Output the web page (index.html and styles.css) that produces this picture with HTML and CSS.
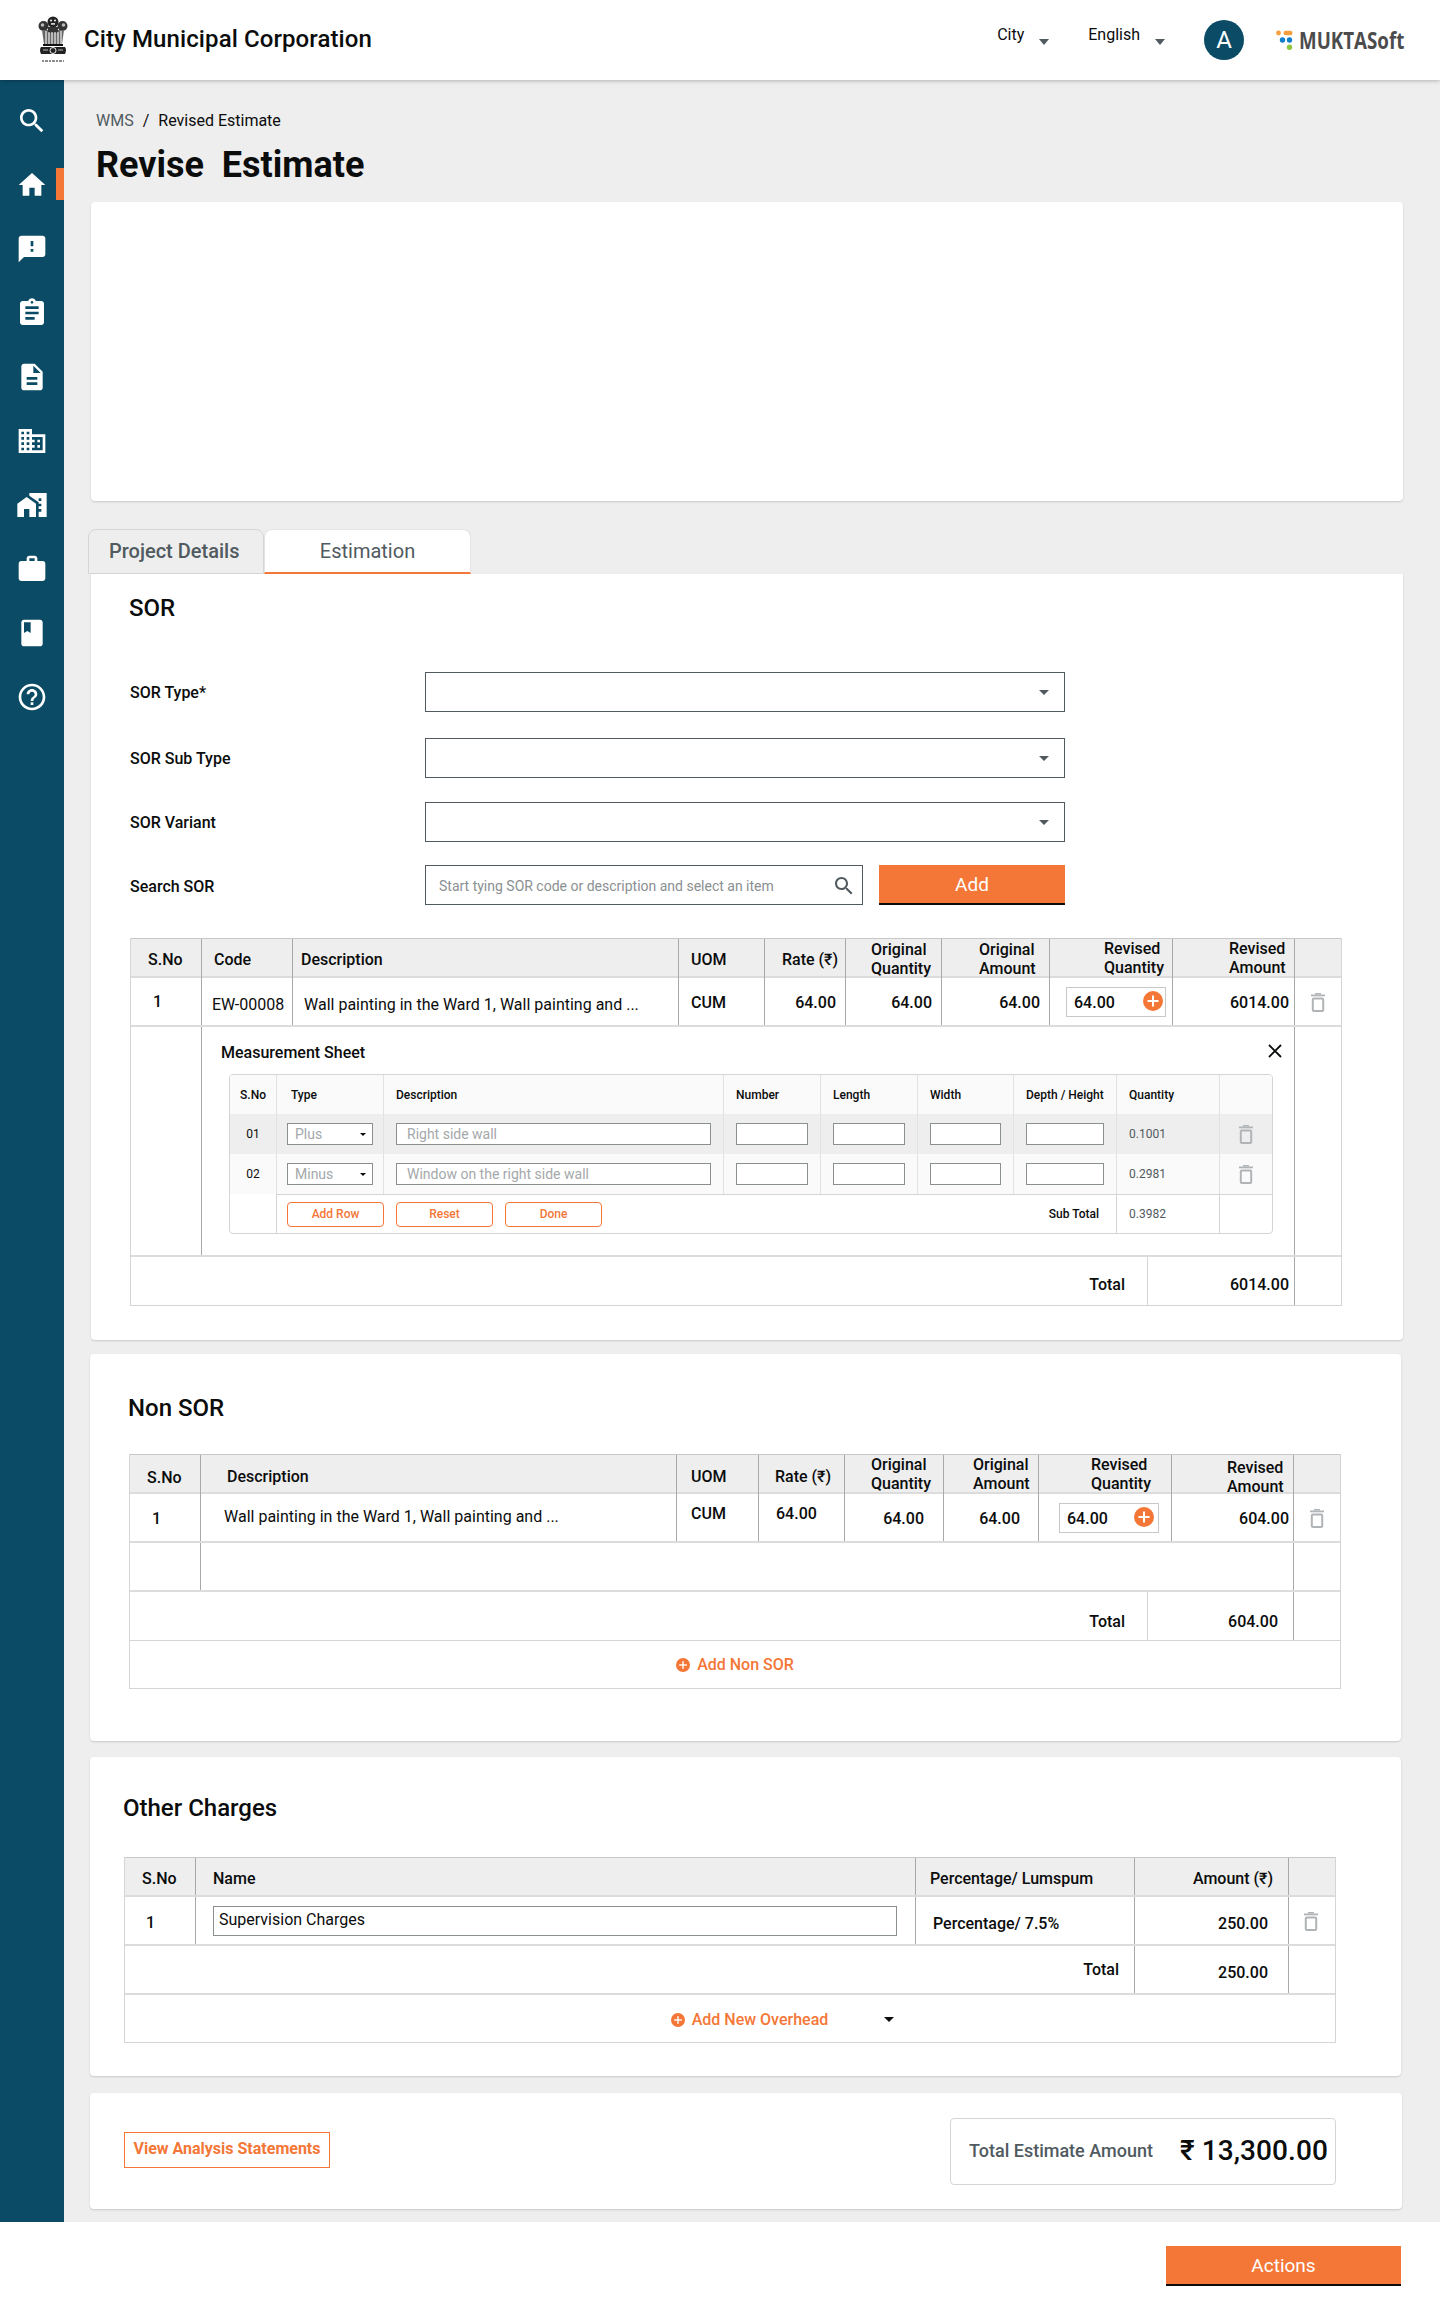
FILE: index.html
```html
<!DOCTYPE html>
<html lang="en">
<head>
<meta charset="utf-8">
<title>Revise Estimate</title>
<link rel="stylesheet" href="styles.css">
</head>
<body>
<svg class="defs" width="0" height="0" aria-hidden="true">
  <symbol id="trash" viewBox="0 0 14 19"><rect x="4" y="0" width="6" height="1.5" fill="#b1b4b6"/><rect x="0" y="1.5" width="14" height="1.8" fill="#b1b4b6"/><rect x="1.8" y="5.4" width="10.4" height="12.6" rx="1" fill="none" stroke="#b1b4b6" stroke-width="2"/></symbol>
  <symbol id="plus" viewBox="0 0 20 20"><circle cx="10" cy="10" r="10" fill="#f47738"/><rect x="4.5" y="9" width="11" height="2" fill="#fff"/><rect x="9" y="4.5" width="2" height="11" fill="#fff"/></symbol>
</svg>

<header class="topbar">
  <svg class="emblem" width="30" height="47" viewBox="0 0 30 47" aria-label="Emblem">
    <circle cx="5.500" cy="10" r="5" fill="#333"/><circle cx="24.500" cy="10" r="5" fill="#333"/><circle cx="15" cy="6" r="5.500" fill="#222"/>
    <circle cx="4.500" cy="9" r="1.800" fill="#bbb"/><circle cx="25.500" cy="9" r="1.800" fill="#bbb"/><circle cx="13" cy="4.500" r="1.100" fill="#ddd"/><circle cx="17" cy="4.500" r="1.100" fill="#ddd"/><rect x="13" y="7" width="4" height="1.800" fill="#ccc"/>
    <path d="M4 14h22l-2 14H6z" fill="#666"/><path d="M10 11h10v6H10z" fill="#333"/>
    <path d="M8 15v13M11 16v12M14 16v12M17 16v12M20 16v12M23 15v13" stroke="#eee" stroke-width="1.200"/>
    <rect x="5" y="28" width="20" height="2" fill="#111"/>
    <path d="M3 31h24q2 3 0 7H3q-2-4 0-7z" fill="#222"/>
    <circle cx="15" cy="34.500" r="3" fill="none" stroke="#eee" stroke-width="1"/><path d="M5 34h5M20 34h5" stroke="#bbb" stroke-width="1.200"/>
    <path d="M4 45h22" stroke="#666" stroke-width="1.500" stroke-dasharray="2 1 3 1"/>
  </svg>
  <div class="org">City Municipal Corporation</div>
  <div class="top-select top-city"><span>City</span><i class="caret caret-grey"></i></div>
  <div class="top-select top-lang"><span>English</span><i class="caret caret-grey"></i></div>
  <div class="avatar">A</div>
  <div class="brand">
    <svg class="brand-mark" width="18" height="20" viewBox="0 0 18 20" aria-hidden="true"><circle cx="2.500" cy="3" r="2.400" fill="#f79e3f"/><rect x="7.500" y="0.700" width="9" height="4.600" rx="2.300" fill="#f79e3f"/><circle cx="6.500" cy="10" r="2.700" fill="#0f7ecb"/><circle cx="13.500" cy="10" r="2.700" fill="#0f7ecb"/><circle cx="13.500" cy="17.300" r="2.700" fill="#8dc63f"/></svg>
    <span class="brand-name">MUKTASoft</span>
  </div>
</header>

<div class="shell">
  <nav class="sidebar">
    <a class="nav-item"><svg viewBox="0 0 24 24"><path d="M15.500 14h-.79l-.28-.27C15.410 12.590 16 11.110 16 9.500 16 5.910 13.090 3 9.500 3S3 5.910 3 9.500 5.910 16 9.500 16c1.610 0 3.090-.59 4.230-1.570l.27.28v.79l5 4.990L20.490 19l-4.990-5zm-6 0C7.010 14 5 11.990 5 9.500S7.010 5 9.500 5 14 7.010 14 9.500 11.990 14 9.500 14z"/></svg></a>
    <a class="nav-item nav-active"><svg viewBox="0 0 24 24"><path d="M10 20v-6h4v6h5v-8h3L12 3 2 12h3v8z"/></svg></a>
    <a class="nav-item"><svg viewBox="0 0 24 24"><path d="M20 2H4c-1.100 0-1.990.9-1.990 2L2 22l4-4h14c1.100 0 2-.9 2-2V4c0-1.100-.9-2-2-2zm-7 12h-2v-2h2v2zm0-4h-2V6h2v4z"/></svg></a>
    <a class="nav-item"><svg viewBox="0 0 24 24"><path d="M19 3h-4.180C14.400 1.840 13.300 1 12 1c-1.300 0-2.400.84-2.820 2H5c-1.100 0-2 .9-2 2v14c0 1.100.9 2 2 2h14c1.100 0 2-.9 2-2V5c0-1.100-.9-2-2-2zm-7 0c.55 0 1 .45 1 1s-.45 1-1 1-1-.45-1-1 .45-1 1-1zm2 14H7v-2h7v2zm3-4H7v-2h10v2zm0-4H7V7h10v2z"/></svg></a>
    <a class="nav-item"><svg viewBox="0 0 24 24"><path d="M14 2H6c-1.100 0-1.990.9-1.990 2L4 20c0 1.100.89 2 1.990 2H18c1.100 0 2-.9 2-2V8l-6-6zm2 16H8v-2h8v2zm0-4H8v-2h8v2zm-3-5V3.500L18.500 9H13z"/></svg></a>
    <a class="nav-item"><svg viewBox="0 0 24 24"><path d="M12 7V3H2v18h20V7H12zM6 19H4v-2h2v2zm0-4H4v-2h2v2zm0-4H4V9h2v2zm0-4H4V5h2v2zm4 12H8v-2h2v2zm0-4H8v-2h2v2zm0-4H8V9h2v2zm0-4H8V5h2v2zm10 12h-8v-2h2v-2h-2v-2h2v-2h-2V9h8v10zm-2-8h-2v2h2v-2zm0 4h-2v2h2v-2z"/></svg></a>
    <a class="nav-item"><svg viewBox="0 0 24 24"><path d="M1 11v10h5v-6h4v6h5V11L8 6zM10 3v1.970l7 5V11h2v2h-2v2h2v2h-2v4h6V3H10zm9 6h-2V7h2v2z"/></svg></a>
    <a class="nav-item"><svg viewBox="0 0 24 24"><path d="M20 6h-4V4c0-1.110-.89-2-2-2h-4c-1.110 0-2 .89-2 2v2H4c-1.110 0-1.990.89-1.990 2L2 19c0 1.110.89 2 2 2h16c1.110 0 2-.89 2-2V8c0-1.110-.89-2-2-2zm-6 0h-4V4h4v2z"/></svg></a>
    <a class="nav-item"><svg viewBox="0 0 24 24"><path d="M18 2H6c-1.100 0-2 .9-2 2v16c0 1.100.9 2 2 2h12c1.100 0 2-.9 2-2V4c0-1.100-.9-2-2-2zM6 4h5v8l-2.500-1.500L6 12V4z"/></svg></a>
    <a class="nav-item"><svg viewBox="0 0 24 24"><path d="M11 18h2v-2h-2v2zm1-16C6.480 2 2 6.480 2 12s4.480 10 10 10 10-4.480 10-10S17.520 2 12 2zm0 18c-4.410 0-8-3.590-8-8s3.590-8 8-8 8 3.590 8 8-3.590 8-8 8zm0-14c-2.210 0-4 1.790-4 4h2c0-1.100.9-2 2-2s2 .9 2 2c0 2-3 1.750-3 5h2c0-2.250 3-2.500 3-5 0-2.210-1.790-4-4-4z"/></svg></a>
  </nav>

  <main class="main">
    <div class="crumbs"><span class="crumb-root">WMS</span><span class="crumb-sep">/</span><span>Revised Estimate</span></div>
    <h1 class="page-title">Revise  Estimate</h1>
    <section class="card card-blank"></section>

    <div class="tabs">
      <div class="tab tab-off">Project Details</div>
      <div class="tab tab-on">Estimation</div>
    </div>

    <section class="card card-sor">
      <h2 class="sec-title">SOR</h2>
      <div class="form-row row-a"><label class="flabel">SOR Type*</label><div class="fselect"><i class="caret caret-dark"></i></div></div>
      <div class="form-row row-b"><label class="flabel">SOR Sub Type</label><div class="fselect"><i class="caret caret-dark"></i></div></div>
      <div class="form-row row-c"><label class="flabel">SOR Variant</label><div class="fselect"><i class="caret caret-dark"></i></div></div>
      <div class="form-row row-d">
        <label class="flabel">Search SOR</label>
        <div class="fsearch-wrap">
          <div class="fsearch"><span class="ph">Start tying SOR code or description and select an item</span>
            <svg width="24" height="24" viewBox="0 0 24 24"><path fill="#505a5f" d="M15.500 14h-.79l-.28-.27C15.410 12.590 16 11.110 16 9.500 16 5.910 13.090 3 9.500 3S3 5.910 3 9.500 5.910 16 9.500 16c1.610 0 3.090-.59 4.230-1.570l.27.28v.79l5 4.990L20.490 19l-4.990-5zm-6 0C7.010 14 5 11.990 5 9.500S7.010 5 9.500 5 14 7.010 14 9.500 11.990 14 9.500 14z"/></svg>
          </div>
          <button class="btn-add">Add</button>
        </div>
      </div>

      <div class="tbl tbl-sor">
        <div class="tr thead">
          <div class="td">S.No</div><div class="td">Code</div><div class="td">Description</div><div class="td">UOM</div><div class="td td-r">Rate (₹)</div><div class="td two">Original Quantity</div><div class="td two">Original Amount</div><div class="td two">Revised Quantity</div><div class="td two">Revised Amount</div><div class="td"></div>
        </div>
        <div class="tr tbody">
          <div class="td med">1</div><div class="td reg">EW-00008</div><div class="td reg">Wall painting in the Ward 1, Wall painting and ...</div><div class="td med">CUM</div><div class="td td-r med">64.00</div><div class="td td-r med">64.00</div><div class="td td-r med">64.00</div><div class="td"><div class="qty"><span>64.00</span><svg width="20" height="20"><use href="#plus"/></svg></div></div><div class="td td-r med">6014.00</div><div class="td td-c"><svg class="trash" width="14" height="19"><use href="#trash"/></svg></div>
        </div>
        <div class="tr tmeasure">
          <div class="td"></div>
          <div class="td measure">
            <div class="m-title"><span>Measurement Sheet</span><svg width="14" height="14" viewBox="0 0 14 14"><path d="M1 1l12 12M13 1L1 13" stroke="#0b0c0c" stroke-width="1.800" fill="none"/></svg></div>
            <div class="mt">
              <div class="mr mr-head"><div class="mc">S.No</div><div class="mc">Type</div><div class="mc">Description</div><div class="mc">Number</div><div class="mc">Length</div><div class="mc">Width</div><div class="mc">Depth / Height</div><div class="mc">Quantity</div><div class="mc"></div></div>
              <div class="mr mr-odd"><div class="mc mc-s">01</div><div class="mc"><div class="m-sel"><span>Plus</span><i class="caret caret-mini"></i></div></div><div class="mc"><input class="m-in" placeholder="Right side wall"></div><div class="mc"><input class="m-in"></div><div class="mc"><input class="m-in"></div><div class="mc"><input class="m-in"></div><div class="mc"><input class="m-in"></div><div class="mc mc-q">0.1001</div><div class="mc mc-t"><svg width="14" height="19"><use href="#trash"/></svg></div></div>
              <div class="mr mr-even"><div class="mc mc-s">02</div><div class="mc"><div class="m-sel"><span>Minus</span><i class="caret caret-mini"></i></div></div><div class="mc"><input class="m-in" placeholder="Window on the right side wall"></div><div class="mc"><input class="m-in"></div><div class="mc"><input class="m-in"></div><div class="mc"><input class="m-in"></div><div class="mc"><input class="m-in"></div><div class="mc mc-q">0.2981</div><div class="mc mc-t"><svg width="14" height="19"><use href="#trash"/></svg></div></div>
              <div class="mr mr-foot"><div class="mc mc-blank"></div><div class="mc mc-btns"><button class="btn-o">Add Row</button><button class="btn-o">Reset</button><button class="btn-o">Done</button><span class="subtotal">Sub Total</span></div><div class="mc mc-q">0.3982</div><div class="mc"></div></div>
            </div>
          </div>
          <div class="td"></div>
        </div>
        <div class="tr ttotal">
          <div class="td td-r total-label">Total</div><div class="td td-r total-val">6014.00</div><div class="td"></div>
        </div>
      </div>
    </section>

    <section class="card card-non">
      <h2 class="sec-title">Non SOR</h2>
      <div class="tbl tbl-non">
        <div class="tr thead">
          <div class="td">S.No</div><div class="td">Description</div><div class="td">UOM</div><div class="td td-r">Rate (₹)</div><div class="td two">Original Quantity</div><div class="td two">Original Amount</div><div class="td two">Revised Quantity</div><div class="td two">Revised Amount</div><div class="td"></div>
        </div>
        <div class="tr tbody">
          <div class="td med">1</div><div class="td reg">Wall painting in the Ward 1, Wall painting and ...</div><div class="td med">CUM</div><div class="td med">64.00</div><div class="td td-r med">64.00</div><div class="td td-r med">64.00</div><div class="td"><div class="qty"><span>64.00</span><svg width="20" height="20"><use href="#plus"/></svg></div></div><div class="td td-r med">604.00</div><div class="td td-c"><svg class="trash" width="14" height="19"><use href="#trash"/></svg></div>
        </div>
        <div class="tr tblank"><div class="td"></div><div class="td"></div><div class="td"></div></div>
        <div class="tr ttotal">
          <div class="td td-r total-label">Total</div><div class="td td-r total-val">604.00</div><div class="td"></div>
        </div>
        <div class="tr tadd"><svg width="14" height="14"><use href="#plus"/></svg><span>Add Non SOR</span></div>
      </div>
    </section>

    <section class="card card-other">
      <h2 class="sec-title">Other Charges</h2>
      <div class="tbl tbl-other">
        <div class="tr thead">
          <div class="td">S.No</div><div class="td">Name</div><div class="td">Percentage/ Lumspum</div><div class="td td-r">Amount (₹)</div><div class="td"></div>
        </div>
        <div class="tr tbody">
          <div class="td med">1</div><div class="td"><input class="name-in" value="Supervision Charges"></div><div class="td med">Percentage/ 7.5%</div><div class="td td-r med">250.00</div><div class="td td-c"><svg class="trash" width="14" height="19"><use href="#trash"/></svg></div>
        </div>
        <div class="tr ttotal">
          <div class="td td-r total-label">Total</div><div class="td td-r total-val">250.00</div><div class="td"></div>
        </div>
        <div class="tr tadd"><svg width="14" height="14"><use href="#plus"/></svg><span>Add New Overhead</span><i class="caret caret-black"></i></div>
      </div>
    </section>

    <section class="card card-summary">
      <button class="btn-view">View Analysis Statements</button>
      <div class="sum-box"><span class="sum-label">Total Estimate Amount</span><span class="sum-val">₹ 13,300.00</span></div>
    </section>
  </main>
</div>

<footer class="footer"><button class="btn-actions">Actions</button></footer>
</body>
</html>
```

FILE: styles.css
```css
* { box-sizing: border-box; }
html, body { margin: 0; padding: 0; }
body { width: 1440px; height: 2310px; overflow: hidden; background: #fff; color: #0b0c0c; font-family: Roboto, "Liberation Sans", sans-serif; font-size: 16px; }
button, input { font-family: inherit; }
.defs { position: absolute; }

/* Top bar */
.topbar { height: 80px; background: #fff; display: flex; align-items: center; padding: 0 36px 0 38px; box-shadow: 0 1px 4px rgba(0,0,0,.25); position: relative; z-index: 2; }
.emblem { margin-top: -1px; flex: none; }
.org { margin-left: 16px; font-size: 24px; font-weight: 500; letter-spacing: .1px; line-height: 28px; margin-top: -3px; white-space: nowrap; }
.top-select { display: flex; align-items: flex-start; line-height: 20px; margin-top: -10px; }
.top-select span { display: block; }
.top-city { margin-left: auto; }
.top-lang { margin-left: 39px; }
.top-city .caret, .top-lang .caret { margin: 14px 0 0 15px; }
.avatar { width: 40px; height: 40px; border-radius: 50%; background: #0b4b66; color: #fff; margin-left: 39px; display: flex; align-items: center; justify-content: center; font-size: 24px; }
.brand { margin-left: 32px; width: 128px; display: flex; align-items: center; }
.brand-mark { flex: none; }
.brand-name { margin-left: 5px; font-family: "Open Sans", Roboto, sans-serif; font-weight: 700; font-size: 24px; line-height: 28px; color: #4c4c4c; display: block; transform: scaleX(.78); transform-origin: left center; white-space: nowrap; }

.caret { display: block; width: 0; height: 0; border-style: solid; border-color: transparent; }
.caret-grey { border-width: 6px 5px 0; border-top-color: #505a5f; }
.caret-dark { border-width: 5px 5px 0; border-top-color: #505a5f; }
.caret-mini { border-width: 3px 3px 0; border-top-color: #0b0c0c; }
.caret-black { border-width: 5px 5px 0; border-top-color: #0b0c0c; }

/* Shell */
.shell { display: flex; height: 2142px; }
.sidebar { width: 64px; flex: none; background: #0b4b66; padding-top: 9px; display: flex; flex-direction: column; }
.nav-item { height: 64px; display: flex; align-items: center; justify-content: center; position: relative; }
.nav-item svg { width: 32px; height: 32px; fill: #fff; }
.nav-active::after { content: ""; position: absolute; right: 0; top: 15px; width: 8px; height: 32px; background: #f47738; }

.main { flex: 1; background: #eee; padding: 31px 0 0 26px; min-width: 0; }
.crumbs { height: 20px; line-height: 20px; padding-left: 6px; display: flex; color: #0b0c0c; }
.crumb-root { color: #505a5f; }
.crumb-sep { margin: 0 9px; }
.page-title { margin: 12px 0 0; padding-left: 6px; height: 44px; line-height: 44px; font-size: 36px; font-weight: 700; white-space: pre; }

.card { background: #fff; border-radius: 4px; box-shadow: 0 1px 2px rgba(0,0,0,.16); }
.card-blank { margin: 15px 0 0 1px; width: 1312px; height: 299px; }

/* Tabs */
.tabs { display: flex; margin: 27px 0 0 -2px; height: 46px; align-items: flex-end; }
.tab { height: 45px; display: flex; align-items: center; font-size: 20px; color: #505a5f; border-radius: 8px 8px 0 0; }
.tab-off { width: 176px; padding: 0 0 2px 20px; font-weight: 500; background: #eee; border: 1px solid #d6d5d4; }
.tab-on { width: 207px; justify-content: center; background: #fff; border: 1px solid #e4e4e4; border-bottom: 2px solid #f47738; padding: 0; }

.sec-title { margin: 0 0 0 -1px; font-size: 24px; font-weight: 500; line-height: 28px; }

.card-sor { margin: 0 0 0 1px; width: 1312px; height: 766px; padding: 20px 0 0 39px; border-radius: 0 0 4px 4px; }
.form-row { display: grid; grid-template-columns: 295px 640px; align-items: center; }
.row-a { margin-top: 50px; }
.row-b { margin-top: 26px; }
.row-c { margin-top: 24px; }
.row-d { margin-top: 23px; }
.flabel { font-weight: 500; line-height: 20px; padding-top: 2px; }
.row-d .flabel { padding-top: 4px; }
.fselect { height: 40px; border: 1px solid #505a5f; display: flex; justify-content: flex-end; align-items: center; padding-right: 15px; }
.fsearch-wrap { display: flex; justify-content: space-between; }
.fsearch { width: 438px; height: 40px; border: 1px solid #505a5f; display: flex; align-items: center; justify-content: space-between; padding: 1px 6px 0 13px; }
.ph { font-size: 14px; color: #8a8f92; white-space: nowrap; }
.btn-add { width: 186px; height: 40px; background: #f47738; color: #fff; font-size: 19px; border: 0; border-bottom: 2px solid #0b0c0c; padding: 1px 0 0; }

/* Tables */
.tbl { width: 1212px; border-left: 1px solid #d6d5d4; border-right: 1px solid #d6d5d4; }
.tbl-sor { margin-top: 33px; }
.tr { display: grid; border-bottom: 2px solid #dcdcdc; }
.td { border-left: 1px solid #a9a9a9; display: flex; align-items: center; min-width: 0; }
.tr > .td:first-child { border-left: 0; }
.thead { height: 40px; background: #eee; border-top: 1px solid #c8c8c8; font-weight: 500; }
.tbody { height: 49px; }
.ttotal { height: 49px; border-bottom: 1px solid #d6d5d4; }
.tblank { height: 49px; }
.med { font-weight: 500; }
.reg { font-weight: 400; }
.td-r { justify-content: flex-end; }
.td-c { justify-content: center; }
.two { line-height: 19px; width: 100%; }
.qty { width: 100px; height: 30px; border: 1px solid #c8c8c8; display: flex; align-items: center; justify-content: space-between; padding: 0 2px 0 7px; font-weight: 500; }
.qty span { padding-top: 2px; }
.qty svg { margin-top: -2px; }
.total-label { font-weight: 500; }
.total-val { font-weight: 500; border-left-color: #d6d5d4; }
.tadd { height: 48px; border-bottom: 1px solid #d6d5d4; display: flex; align-items: center; justify-content: center; color: #f47738; font-weight: 500; gap: 7px; }

.tbl-sor .tr.thead, .tbl-sor .tr.tbody { grid-template-columns: 70px 91px 386px 86px 81px 96px 108px 123px 122px 47px; }
.tbl-sor .thead .td:nth-child(1) { padding-left: 17px; }
.tbl-sor .thead .td:nth-child(2) { padding-left: 12px; }
.tbl-sor .thead .td:nth-child(3) { padding-left: 8px; }
.tbl-sor .thead .td:nth-child(4) { padding-left: 12px; }
.tbl-sor .thead .td:nth-child(5) { padding-right: 7px; }
.tbl-sor .thead .td:nth-child(6) { padding: 0 10px 0 25px; }
.tbl-sor .thead .td:nth-child(7) { padding: 0 10px 0 37px; }
.tbl-sor .thead .td:nth-child(8) { padding: 0 4px 2px 54px; }
.tbl-sor .thead .td:nth-child(9) { padding: 0 4px 2px 56px; }
.tbl-sor .tbody .td:nth-child(1) { padding: 0 0 0 22px; }
.tbl-sor .tbody .td:nth-child(2) { padding: 6px 0 0 10px; white-space: nowrap; }
.tbl-sor .tbody .td:nth-child(3) { padding: 6px 0 0 11px; white-space: nowrap; }
.tbl-sor .tbody .td:nth-child(4) { padding: 2px 0 0 12px; }
.tbl-sor .tbody .td:nth-child(5), .tbl-sor .tbody .td:nth-child(6), .tbl-sor .tbody .td:nth-child(7) { padding: 2px 9px 0 0; }
.tbl-sor .tbody .td:nth-child(8) { padding-left: 16px; }
.tbl-sor .tbody .td:nth-child(9) { padding: 2px 5px 0 0; }
.tbl-sor .tbody .td:nth-child(10) { padding-top: 2px; }
.tbl-sor .tmeasure { grid-template-columns: 70px 1093px 47px; height: 230px; }
.tbl-sor .ttotal { grid-template-columns: 1016px 147px 47px; }
.total-label { padding: 6px 22px 0 0; }
.total-val { padding-top: 6px; }
.tbl-sor .total-val { padding-right: 5px; }
.ttotal .td:last-child { border-left-color: #a9a9a9; }

/* Measurement sheet */
.measure { display: block; padding: 15px 21px 0 27px; }
.m-title { display: flex; justify-content: space-between; align-items: center; height: 20px; margin: 0 -9px 12px -8px; font-weight: 500; }
.m-title svg { margin-top: -3px; }
.mt { border: 1px solid #d6d5d4; border-radius: 4px; overflow: hidden; }
.mr { display: grid; grid-template-columns: 46px 107px 340px 97px 97px 96px 103px 103px 53px; height: 40px; }
.mc { border-left: 1px solid #e2e2e2; display: flex; align-items: center; padding: 0 12px; font-size: 12px; min-width: 0; }
.mr > .mc:first-child { border-left: 0; padding: 0; justify-content: center; }
.mr-head { height: 39px; background: #fafafa; font-weight: 500; }
.mr-odd { background: #eee; }
.mr-even { background: #fafafa; }
.mr-foot { height: 39px; grid-template-columns: 46px 840px 103px 53px; }
.mr-foot .mc:not(.mc-blank) { border-top: 1px solid #d6d5d4; }
.mr-foot .mc { border-left-color: #d6d5d4; }
.mc-s, .mc-q { color: #505a5f; }
.mc-s { color: #0b0c0c; }
.mc-t { justify-content: center; padding: 0; }
.m-in { width: 100%; height: 22px; border: 1px solid #8a8f92; background: #fff; padding: 0 10px; font-size: 14px; border-radius: 0; outline: none; }
.m-in::placeholder { color: #a4a8aa; opacity: 1; }
.mr .mc:nth-child(2) { padding: 0 10px; }
.mr-head .mc:nth-child(2) { padding: 0 14px; }
.m-sel { width: 87px; height: 22px; border: 1px solid #8a8f92; background: #fff; display: flex; align-items: center; justify-content: space-between; padding: 0 6px 0 7px; font-size: 14px; color: #a4a8aa; }
.mr-foot .mc.mc-btns:nth-child(2) { padding: 0 17px 0 10px; display: flex; gap: 12px; }
.btn-o { width: 97px; height: 25px; background: #fff; color: #f47738; border: 1px solid #f47738; border-radius: 4px; font-size: 12px; font-weight: 500; padding: 0; }
.subtotal { margin-left: auto; font-size: 12px; font-weight: 500; }

/* Non SOR */
.card-non { margin: 14px 0 0; width: 1311px; height: 387px; padding: 40px 0 0 39px; }
.tbl-non { margin-top: 32px; }
.tbl-non .tr.thead, .tbl-non .tr.tbody { grid-template-columns: 70px 476px 82px 86px 99px 95px 133px 122px 47px; }
.tbl-non .thead .td:nth-child(1) { padding: 2px 0 0 17px; }
.tbl-non .thead .td:nth-child(2) { padding: 1px 0 0 26px; }
.tbl-non .thead .td:nth-child(3) { padding: 1px 0 0 14px; }
.tbl-non .thead .td:nth-child(4) { padding: 1px 13px 0 0; }
.tbl-non .thead .td:nth-child(5) { padding: 0 8px 4px 26px; }
.tbl-non .thead .td:nth-child(6) { padding: 0 4px 4px 29px; }
.tbl-non .thead .td:nth-child(7) { padding: 0 8px 4px 52px; }
.tbl-non .thead .td:nth-child(8) { padding: 2px 4px 0 55px; }
.tbl-non .tbody .td:nth-child(1) { padding: 2px 0 0 22px; }
.tbl-non .tbody .td:nth-child(2) { padding: 0 0 2px 23px; white-space: nowrap; }
.tbl-non .tbody .td:nth-child(3) { padding: 0 0 8px 14px; }
.tbl-non .tbody .td:nth-child(4) { padding: 0 0 8px 17px; }
.tbl-non .tbody .td:nth-child(5) { padding: 2px 19px 0 0; }
.tbl-non .tbody .td:nth-child(6) { padding: 2px 18px 0 0; }
.tbl-non .tbody .td:nth-child(7) { padding-left: 20px; }
.tbl-non .tbody .td:nth-child(8) { padding: 2px 4px 0 0; }
.tbl-non .tbody .td:nth-child(9) { padding-top: 2px; }
.tbl-non .qty { padding-right: 4px; }
.tbl-non .tblank { grid-template-columns: 70px 1093px 47px; }
.tbl-non .ttotal { grid-template-columns: 1017px 146px 47px; border-bottom-color: #d6d5d4; }
.tbl-non .ttotal .total-label { padding-top: 10px; }
.tbl-non .ttotal .total-val { padding: 10px 15px 0 0; }

/* Other charges */
.card-other { margin: 16px 0 0; width: 1311px; height: 319px; padding: 37px 0 0 34px; }
.tbl-other { margin-top: 35px; }
.tbl-other .tr.thead, .tbl-other .tr.tbody { grid-template-columns: 70px 720px 219px 154px 47px; }
.tbl-other .thead .td:nth-child(1) { padding: 4px 0 0 17px; }
.tbl-other .thead .td:nth-child(2) { padding: 4px 0 0 17px; }
.tbl-other .thead .td:nth-child(3) { padding: 4px 0 0 14px; }
.tbl-other .thead .td:nth-child(4) { padding: 4px 15px 0 0; }
.tbl-other .tbody .td:nth-child(1) { padding: 4px 0 0 21px; }
.tbl-other .tbody .td:nth-child(2) { padding: 0 0 0 17px; }
.tbl-other .tbody .td:nth-child(3) { padding: 5px 0 0 17px; }
.tbl-other .tbody .td:nth-child(4) { padding: 5px 20px 0 0; }
.tbl-other .tbody .td:nth-child(5) { padding: 2px 2px 0 0; }
.name-in { width: 684px; height: 30px; margin-top: 1px; border: 1px solid #8a8f92; padding: 0 5px 4px; font-size: 16px; color: #0b0c0c; background: #fff; border-radius: 0; outline: none; }
.tbl-other .ttotal { grid-template-columns: 1009px 154px 47px; border-bottom: 2px solid #dcdcdc; }
.tbl-other .total-label { padding: 0 15px 1px 0; }
.tbl-other .total-val { padding: 5px 20px 0 0; border-left-color: #a9a9a9; }
.tbl-other .tadd { padding: 2px 0 0 105px; }
.tbl-other .tadd .caret { margin-left: 49px; }

/* Summary */
.card-summary { margin: 17px 0 0; width: 1312px; height: 116px; padding: 0 66px 0 34px; display: flex; align-items: center; justify-content: space-between; }
.btn-view { width: 206px; height: 36px; background: #fff; color: #f47738; border: 1px solid #f47738; font-size: 16px; font-weight: 700; padding: 0 0 2px; margin-top: -3px; }
.sum-box { width: 386px; height: 67px; border: 1px solid #d6d5d4; border-radius: 4px; display: flex; align-items: center; justify-content: space-between; padding: 0 7px 2px 18px; }
.sum-label { font-size: 18px; font-weight: 500; color: #505a5f; }
.sum-val { font-size: 28px; font-weight: 500; letter-spacing: .1px; }

/* Footer */
.footer { height: 88px; background: #fff; display: flex; justify-content: flex-end; padding: 24px 39px 0 0; }
.btn-actions { width: 235px; height: 40px; background: #f47738; color: #fff; border: 0; border-bottom: 2px solid #0b0c0c; font-size: 19px; padding: 0; }
```
